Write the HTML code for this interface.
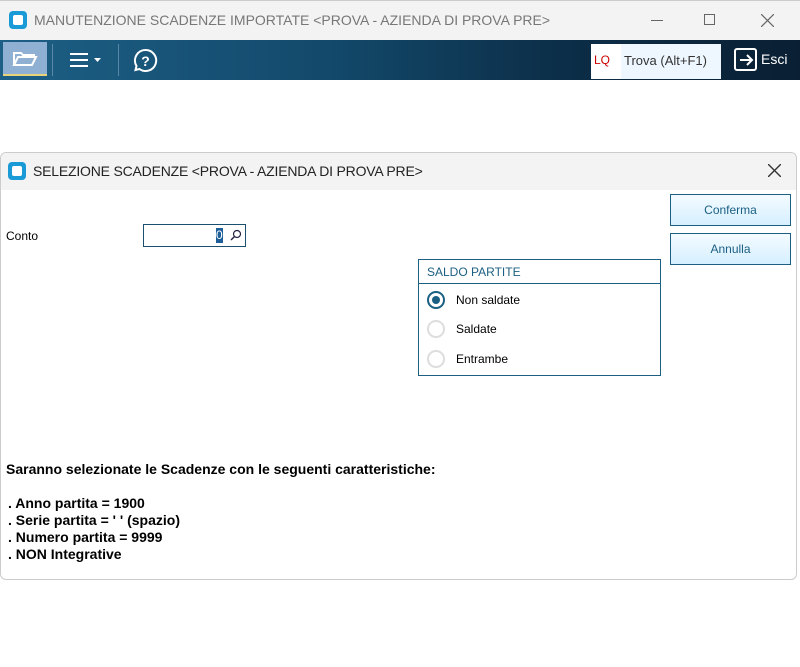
<!DOCTYPE html>
<html><head><meta charset="utf-8"><style>
*{margin:0;padding:0;box-sizing:border-box}
body{width:800px;height:667px;background:#fff;font-family:"Liberation Sans",sans-serif;position:relative;overflow:hidden;font-size:12px;color:#000}
.abs{position:absolute}
.tb{left:0;top:0;width:800px;height:40px;background:#f3f3f3;border-top:1px solid #ccc}
.tool{left:0;top:40px;width:800px;height:40px;background:linear-gradient(90deg,#1d5f85 0%,#134a6c 40%,#0c2e48 70%,#0a1f33 100%)}
.logo{width:18px;height:18px;border-radius:4px;background:#1a9ad6;}
.logo::after{content:"";position:absolute;left:4px;top:4px;width:10px;height:10px;background:#fff;border-radius:2px}
.dlg{left:0;top:152px;width:797px;height:428px;border:1px solid #ccc;border-radius:6px;background:#fff;overflow:hidden}
.btn{width:121px;height:32px;border:1px solid #1b5f82;background:linear-gradient(#f4fbff,#d6efff);color:#1b5f82;text-align:center;line-height:30px;font-size:12px}
.rad{width:18px;height:18px;border-radius:50%;border:2px solid #ddd;background:#fff}
.b{font-weight:bold;font-size:14px;font-family:"Liberation Sans",sans-serif}
</style></head><body>
<div class="abs tb"></div>
<div class="abs logo" style="left:9px;top:11px"></div>
<div class="abs" style="left:34px;top:12px;font-size:14px;color:#777">MANUTENZIONE SCADENZE IMPORTATE &lt;PROVA - AZIENDA DI PROVA PRE&gt;</div>
<div class="abs" style="left:651px;top:20px;width:12px;height:1px;background:#666"></div>
<div class="abs" style="left:704px;top:14px;width:11px;height:11px;border:1px solid #666"></div>
<svg class="abs" style="left:761px;top:14px" width="13" height="13"><path d="M0 0L13 13M13 0L0 13" stroke="#666" stroke-width="1.2"/></svg>
<div class="abs tool"></div>
<div class="abs" style="left:3px;top:42px;width:44px;height:34px;background:#8fb0d2;border-bottom:2px solid #e8d27a"></div>
<svg class="abs" style="left:12px;top:50px" width="26" height="18"><path d="M2 3h7l2 2h11v2H6L2 15z M2 15l4-8h18l-4 8z" fill="none" stroke="#fff" stroke-width="2"/></svg>
<div class="abs" style="left:52px;top:44px;width:1px;height:32px;background:#5b87a6"></div>
<svg class="abs" style="left:70px;top:52px" width="34" height="16"><path d="M0 2h18M0 8h18M0 14h18" stroke="#fff" stroke-width="2"/><path d="M24 6h7l-3.5 4z" fill="#fff"/></svg>
<div class="abs" style="left:118px;top:44px;width:1px;height:32px;background:#5b87a6"></div>
<svg class="abs" style="left:133px;top:48px" width="25" height="25"><path d="M12.5 2a10.5 10.5 0 1 1 -6 19l-4 1 1-4A10.5 10.5 0 0 1 12.5 2z" fill="none" stroke="#fff" stroke-width="2"/><text x="12.5" y="18" font-size="14" font-weight="bold" fill="#fff" text-anchor="middle" font-family="Liberation Sans">?</text></svg>
<div class="abs" style="left:591px;top:44px;width:30px;height:35px;background:#fff;color:#c00;font-size:12px;line-height:32px;padding-left:3px">LQ</div>
<div class="abs" style="left:621px;top:44px;width:100px;height:35px;background:#eef7ff;color:#333;font-size:13px;line-height:33px;padding-left:3px">Trova (Alt+F1)</div>
<svg class="abs" style="left:734px;top:48px" width="24" height="24"><rect x="1" y="1" width="21" height="21" rx="2" fill="none" stroke="#fff" stroke-width="2"/><path d="M6 12h12M13 7l5 5-5 5" fill="none" stroke="#fff" stroke-width="2"/></svg>
<div class="abs" style="left:761px;top:51px;color:#fff;font-size:14px">Esci</div>

<div class="abs dlg">
<div class="abs" style="left:0;top:0;width:797px;height:37px;background:#f3f3f3"></div>
</div>
<div class="abs logo" style="left:8px;top:162px"></div>
<div class="abs" style="left:33px;top:163px;font-size:14px;color:#222;letter-spacing:-0.2px">SELEZIONE SCADENZE &lt;PROVA - AZIENDA DI PROVA PRE&gt;</div>
<svg class="abs" style="left:768px;top:164px" width="13" height="13"><path d="M0 0L13 13M13 0L0 13" stroke="#333" stroke-width="1.4"/></svg>

<div class="abs" style="left:6px;top:229px;font-size:12px">Conto</div>
<div class="abs" style="left:143px;top:224px;width:103px;height:23px;border:1px solid #1b4f70;background:#fff"></div>
<div class="abs" style="left:216px;top:228px;width:7px;height:15px;background:#1e5f9a;color:#fff;font-size:12px;line-height:15px">0</div>
<svg class="abs" style="left:230px;top:229px" width="12" height="12"><circle cx="7" cy="5" r="3.5" fill="none" stroke="#224" stroke-width="1.2"/><path d="M4.5 7.5L1 11" stroke="#224" stroke-width="1.4"/></svg>

<div class="abs btn" style="left:670px;top:194px">Conferma</div>
<div class="abs btn" style="left:670px;top:233px">Annulla</div>

<div class="abs" style="left:418px;top:259px;width:243px;height:117px;border:1px solid #1b5f82"></div>
<div class="abs" style="left:418px;top:283px;width:243px;height:1px;background:#1b5f82"></div>
<div class="abs" style="left:427px;top:265px;color:#1b5f82;font-size:12px">SALDO PARTITE</div>
<div class="abs rad" style="left:427px;top:291px;border-color:#1b5f82"></div>
<div class="abs" style="left:432px;top:296px;width:8px;height:8px;border-radius:50%;background:#1b5f82"></div>
<div class="abs rad" style="left:427px;top:320px"></div>
<div class="abs rad" style="left:427px;top:350px"></div>
<div class="abs" style="left:456px;top:293px">Non saldate</div>
<div class="abs" style="left:456px;top:322px">Saldate</div>
<div class="abs" style="left:456px;top:352px">Entrambe</div>

<div class="abs b" style="left:6px;top:461px">Saranno selezionate le Scadenze con le seguenti caratteristiche:</div>
<div class="abs b" style="left:8px;top:495px;line-height:17px">. Anno partita = 1900<br>. Serie partita = ' ' (spazio)<br>. Numero partita = 9999<br>. NON Integrative</div>
</body></html>
